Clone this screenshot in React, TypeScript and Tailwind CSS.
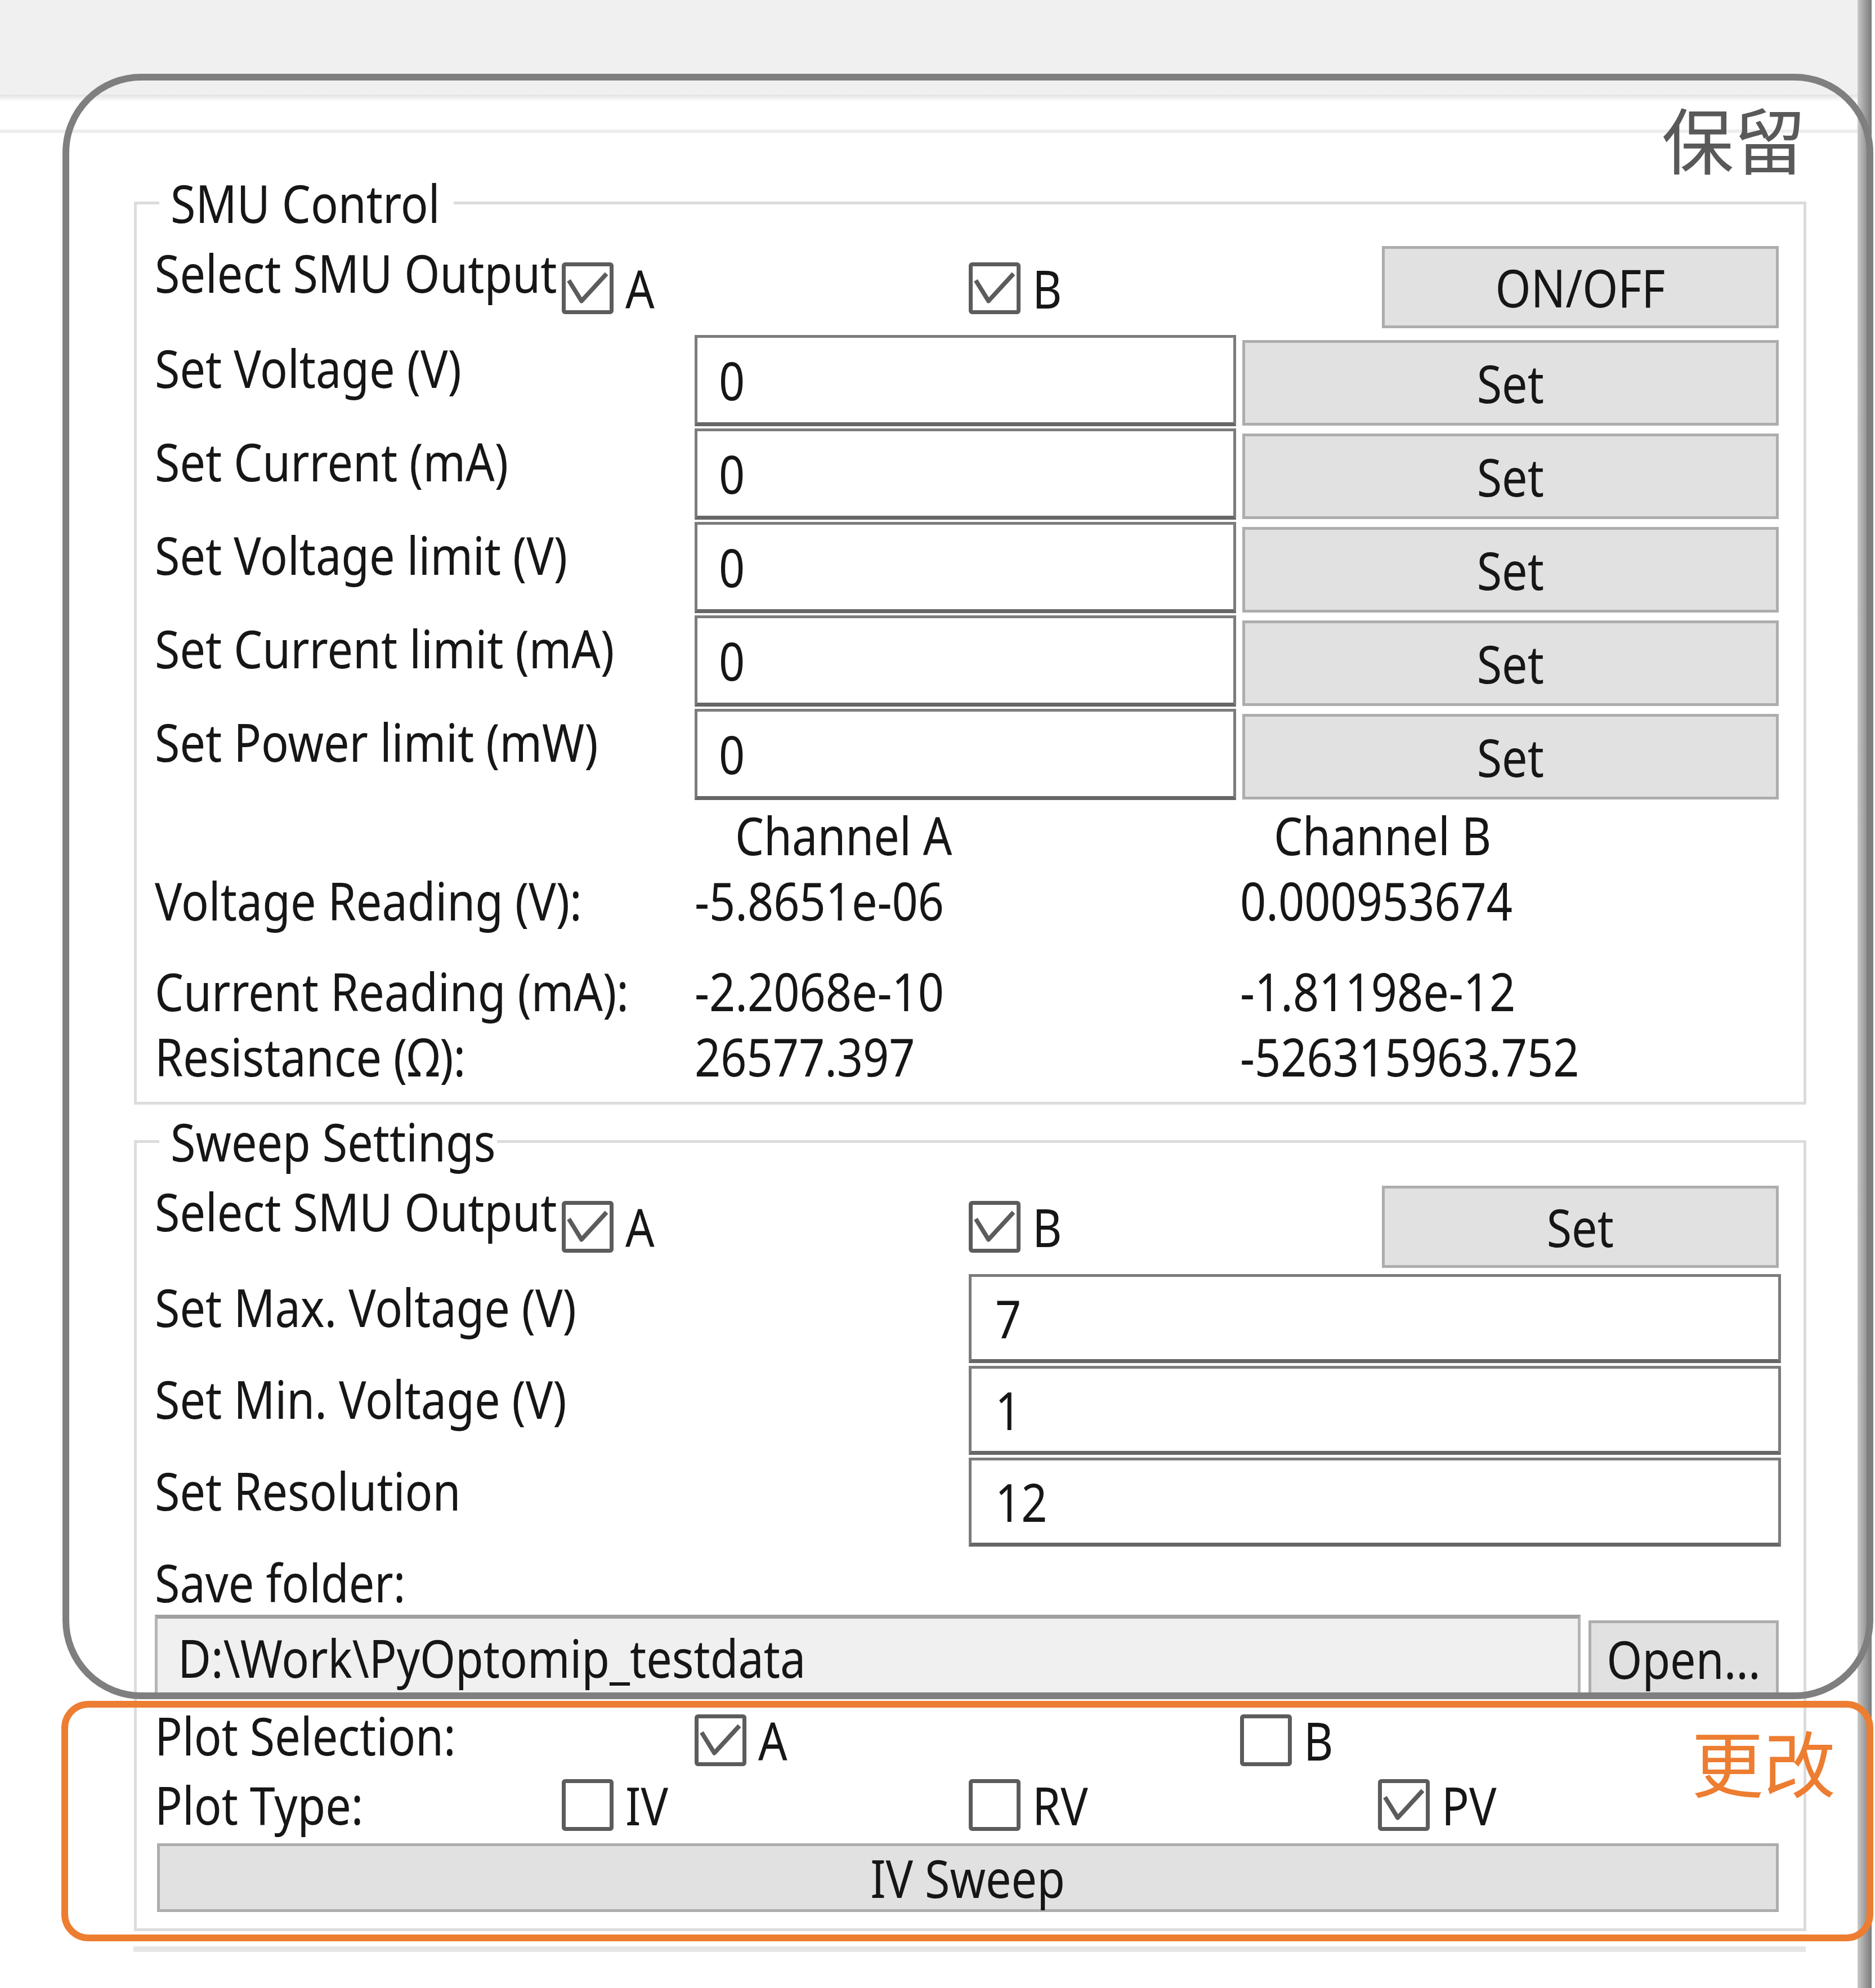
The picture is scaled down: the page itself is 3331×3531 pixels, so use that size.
import type { ReactNode } from 'react';

const text = 'text-[94px] leading-[116px] whitespace-nowrap';

// the screenshot is squeezed sideways, so glyphs get narrowed to match
function T({ children, center = false }: { children: ReactNode; center?: boolean }) {
  return (
    <span className={`inline-block scale-x-[0.86] ${center ? 'origin-center' : 'origin-left'}`}>{children}</span>
  );
}

function CheckBox({ checked, label }: { checked: boolean; label: string }) {
  return (
    <div className="flex items-center gap-[21px]">
      <span className="flex h-[92px] w-[92px] shrink-0 rounded-[6px] border-[7px] border-[#5c5c5c] bg-white">
        {checked && (
          <svg viewBox="0 0 100 100" className="h-full w-full">
            <path d="M7 32 L36 79 L93 17" fill="none" stroke="#5c5c5c" strokeWidth="10" strokeLinejoin="round" />
          </svg>
        )}
      </span>
      <span className={text}>
        <T>{label}</T>
      </span>
    </div>
  );
}

function Btn({ className, children }: { className: string; children: ReactNode }) {
  return (
    <div className={`flex items-center justify-center border-[5px] border-[#adadad] bg-[#e1e1e1] ${text} ${className}`}>
      <T center>{children}</T>
    </div>
  );
}

function TextBox({ className, value }: { className: string; value: string }) {
  return (
    <div className={`flex items-center border-[5px] border-b-[7px] border-[#7c7c7c] border-b-[#666] bg-white ${text} ${className}`}>
      <T>{value}</T>
    </div>
  );
}

function Label({ className = '', children }: { className?: string; children?: ReactNode }) {
  return (
    <div className={`${text} ${className}`}>
      <T>{children}</T>
    </div>
  );
}

const smuRows = [
  ['Set Voltage (V)', '0'],
  ['Set Current (mA)', '0'],
  ['Set Voltage limit (V)', '0'],
  ['Set Current limit (mA)', '0'],
  ['Set Power limit (mW)', '0'],
];

const sweepRows = [
  ['Set Max. Voltage (V)', '7'],
  ['Set Min. Voltage (V)', '1'],
  ['Set Resolution', '12'],
];

export default function App() {
  return (
    <div className="relative flex h-[3531px] w-[3331px] overflow-hidden bg-white font-['Noto_Sans','Open_Sans',sans-serif] text-[#161616]">
      <div className="flex w-[3300px] flex-col">
        <div className="h-[168px] bg-[#f0f0f0]" />
        <div className="h-[12px] bg-linear-to-b from-[#e2e2e2] to-white" />
        <div className="mt-[50px] h-[6px] bg-[#ededed]" />

        <fieldset className="ml-[238px] mt-[66px] w-[2971px] border-[5px] border-[#dcdcdc] pb-[23px]">
          <legend className={`ml-[40px] w-[523px] px-[20px] ${text}`}>
            <T>SMU Control</T>
          </legend>
          <div className="pl-[32px]">
            <div className="flex h-[177px]">
              <Label className="mt-[8px] w-[723px]">Select SMU Output</Label>
              <div className="mt-[36px] w-[723px]">
                <CheckBox checked label="A" />
              </div>
              <div className="mt-[36px] w-[734px]">
                <CheckBox checked label="B" />
              </div>
              <Btn className="mt-[19px] h-[146px] w-[705px]">ON/OFF</Btn>
            </div>
            {smuRows.map(([label, value]) => (
              <div key={label} className="flex h-[166px]">
                <Label className="w-[959px]">{label}</Label>
                <TextBox className="h-[162px] w-[962px] pl-[38px]" value={value} />
                <Btn className="ml-[11px] mt-[9px] h-[152px] w-[953px]">Set</Btn>
              </div>
            ))}
            <div className="flex h-[116px]">
              <div className="w-[1031px]" />
              <Label className="w-[957px]">Channel A</Label>
              <Label>Channel B</Label>
            </div>
            <div className="flex h-[116px]">
              <Label className="w-[959px]">Voltage Reading (V):</Label>
              <Label className="w-[969px]">-5.8651e-06</Label>
              <Label>0.000953674</Label>
            </div>
            <div className="mt-[45px] flex h-[116px]">
              <Label className="w-[959px]">Current Reading (mA):</Label>
              <Label className="w-[969px]">-2.2068e-10</Label>
              <Label>-1.81198e-12</Label>
            </div>
            <div className="flex h-[116px]">
              <Label className="w-[959px]">Resistance (Ω):</Label>
              <Label className="w-[969px]">26577.397</Label>
              <Label>-526315963.752</Label>
            </div>
          </div>
        </fieldset>

        <fieldset className="ml-[238px] mt-[7px] w-[2971px] border-[5px] border-[#dcdcdc] pb-[29px]">
          <legend className={`ml-[40px] w-[600px] px-[20px] ${text}`}>
            <T>Sweep Settings</T>
          </legend>
          <div className="pl-[32px]">
            <div className="flex h-[178px]">
              <Label className="mt-[8px] w-[723px]">Select SMU Output</Label>
              <div className="mt-[36px] w-[723px]">
                <CheckBox checked label="A" />
              </div>
              <div className="mt-[36px] w-[734px]">
                <CheckBox checked label="B" />
              </div>
              <Btn className="mt-[21px] h-[146px] w-[705px]">Set</Btn>
            </div>
            {sweepRows.map(([label, value]) => (
              <div key={label} className="flex h-[163px]">
                <Label className="w-[1446px]">{label}</Label>
                <TextBox className="h-[158px] w-[1443px] pl-[42px]" value={value} />
              </div>
            ))}
            <Label className="h-[116px]">Save folder:</Label>
            <div className="flex h-[152px]">
              <div className={`flex h-[150px] w-[2533px] items-center border-[5px] border-t-[7px] border-[#b4b4b4] border-t-[#a0a0a0] bg-[#f0f0f0] pl-[36px] ${text}`}>
                <T>{'D:\\Work\\PyOptomip_testdata'}</T>
              </div>
              <Btn className="ml-[14px] mt-[10px] h-[135px] w-[338px]">Open...</Btn>
            </div>
            <div className="flex h-[120px]">
              <Label className="mt-[4px] w-[959px]">Plot Selection:</Label>
              <div className="mt-[13px] w-[969px]">
                <CheckBox checked label="A" />
              </div>
              <div className="mt-[13px]">
                <CheckBox checked={false} label="B" />
              </div>
            </div>
            <div className="flex h-[125px]">
              <Label className="mt-[7px] w-[723px]">Plot Type:</Label>
              <div className="mt-[8px] w-[723px]">
                <CheckBox checked={false} label="IV" />
              </div>
              <div className="mt-[8px] w-[727px]">
                <CheckBox checked={false} label="RV" />
              </div>
              <div className="mt-[8px]">
                <CheckBox checked label="PV" />
              </div>
            </div>
            <Btn className="ml-[4px] mt-[9px] h-[122px] w-[2881px]">IV Sweep</Btn>
          </div>
        </fieldset>
        <div className="ml-[237px] mt-[27px] h-[10px] w-[2971px] bg-[#e6e6e6]" />
      </div>
      <div className="w-[25px] bg-linear-to-r from-[#c8c8c8] to-[#7a7a7a]" />

      {/* annotation frames */}
      <div className="pointer-events-none absolute left-[111px] top-[131px] h-[2887px] w-[3217px] rounded-[140px] border-[12px] border-[#7f7f7f]" />
      <div className="pointer-events-none absolute left-[109px] top-[3021px] h-[427px] w-[3219px] rounded-[48px] border-[12px] border-[#ed7d31]" />
      <div className="absolute left-[2952px] top-[181px] font-['Noto_Sans_CJK_SC',sans-serif] text-[128px] leading-[128px] text-[#595959]">
        保留
      </div>
      <div className="absolute left-[3005px] top-[3064px] font-['Noto_Sans_CJK_SC',sans-serif] text-[128px] leading-[128px] text-[#ed7d31]">
        更改
      </div>
    </div>
  );
}
